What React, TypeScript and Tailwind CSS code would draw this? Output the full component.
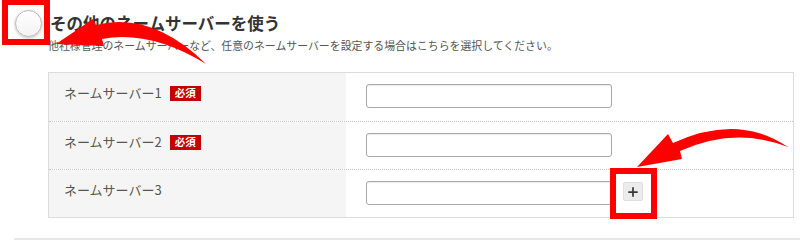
import { Plus } from "lucide-react";

const jp = "font-['Noto_Sans_CJK_JP','Noto_Sans',sans-serif]";

interface Row {
  label: string;
  required: boolean;
  addable?: boolean;
}

const rows: Row[] = [
  { label: "ネームサーバー1", required: true },
  { label: "ネームサーバー2", required: true },
  { label: "ネームサーバー3", required: false, addable: true },
];

function Radio() {
  return (
    <span className="block size-[27px] shrink-0 rounded-full border border-[#b5b5b5] bg-gradient-to-b from-white to-[#f3f3f3] shadow-[0_1px_3px_rgba(0,0,0,0.25)]" />
  );
}

export default function App() {
  return (
    <div className={`relative h-[240px] w-[800px] overflow-hidden bg-white ${jp}`}>
      <div className="flex items-center gap-[8px] pl-[15px] pt-[10px]">
        <Radio />
        <h2 className="text-[16.5px] font-bold leading-[27px] text-[#333]">
          その他のネームサーバーを使う
        </h2>
      </div>
      <p className="ml-[48px] mt-[1px] text-[10.9px] leading-[14px] text-[#555]">
        他社様管理のネームサーバーなど、任意のネームサーバーを設定する場合はこちらを選択してください。
      </p>

      <div className="ml-[48px] mt-[20px] w-[746px] border border-[#dcdcdc]">
        {rows.map((r, i) => (
          <div
            key={r.label}
            className={`grid grid-cols-[297px_1fr] ${i === 0 ? "h-[48px]" : "h-[48px] border-t border-dotted border-[#c8c8c8]"}`}
          >
            <div className="flex items-start gap-[8px] bg-[#f5f5f5] pl-[15px] pt-[11px]">
              <span className="text-[13px] leading-[18px] text-[#555]">{r.label}</span>
              {r.required && (
                <span className="mt-[1.5px] flex h-[15px] w-[31px] items-center justify-center bg-[#c40000] text-[10.5px] font-bold leading-none text-white">
                  必須
                </span>
              )}
            </div>
            <div className="flex items-start gap-[11px] pl-[20px] pt-[11px]">
              <input
                type="text"
                className="h-[24px] w-[246px] rounded-[3px] border border-[#a9a9a9] bg-white shadow-[inset_0_1px_1px_rgba(0,0,0,0.08)]"
              />
              {r.addable && (
                <button
                  type="button"
                  className="mt-[1px] flex h-[19px] w-[20px] items-center justify-center rounded-[2px] border border-[#dedede] bg-[#ececec] text-[#3a3a3a]"
                >
                  <Plus size={14} strokeWidth={3} />
                </button>
              )}
            </div>
          </div>
        ))}
      </div>

      <div className="ml-[14px] mt-[20px] h-[2px] bg-[#e8e8e8]" />

      {/* annotations */}
      <div className="absolute left-[2px] top-[-1px] h-[46px] w-[48px] border-[6px] border-[#ff0000]" />
      <div className="absolute left-[610px] top-[168px] h-[51px] w-[47px] border-[6px] border-[#ff0000]" />
      <svg className="pointer-events-none absolute left-0 top-0" width="800" height="240" viewBox="0 0 800 240">
        <path
          d="M56,44 L93,19 L96,25 Q152,11 206,64 Q150,30 102,39 L104,46 Z"
          fill="#ff0000"
        />
        <path
          d="M637,167 L668,134 L673,143 Q738,113 788,147 Q735,126 680,151 L682,159 Z"
          fill="#ff0000"
        />
      </svg>
    </div>
  );
}
